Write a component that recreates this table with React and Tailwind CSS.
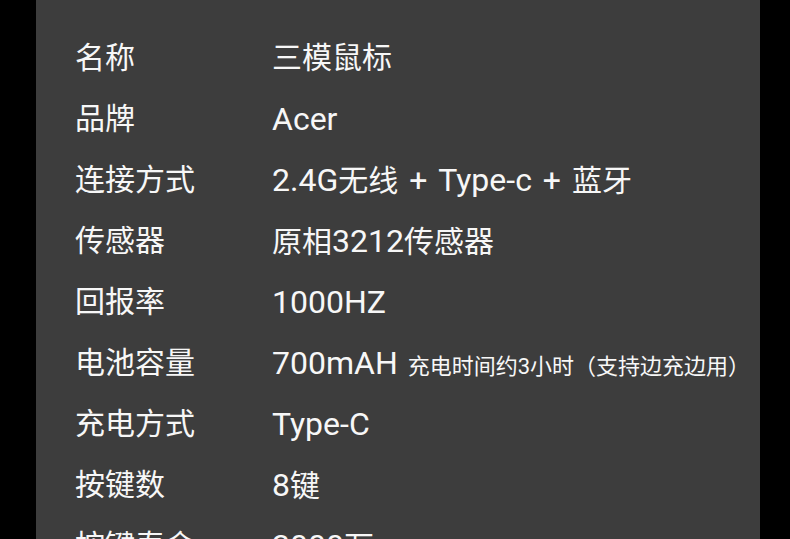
const specs = [
  ["名称", "三模鼠标"],
  ["品牌", "Acer"],
  ["连接方式", "2.4G无线 + Type-c + 蓝牙"],
  ["传感器", "原相3212传感器"],
  ["回报率", "1000HZ"],
  ["电池容量", "700mAH", "充电时间约3小时（支持边充边用）"],
  ["充电方式", "Type-C"],
  ["按键数", "8键"],
  ["按键寿命", "2000万"],
];

const cjk = /([\u4e00-\u9fff\uff00-\uffef]+)/;

// latin runs render a touch larger than the han characters
function Value({ text }) {
  return text
    .split(cjk)
    .filter(Boolean)
    .map((part, i) =>
      cjk.test(part) ? (
        <span key={i} className="text-[30px]">{part}</span>
      ) : (
        <span key={i} className="text-[32px]">{part}</span>
      )
    );
}

export default function App() {
  return (
    <div className="h-[539px] w-[790px] overflow-hidden bg-black">
      <div
        className="ml-[36px] mr-[30px] h-full bg-[#3d3d3d] pl-[39px] pt-[27px] text-[#f7f7f7]"
        style={{ fontFamily: 'Roboto, "Noto Sans CJK SC", sans-serif' }}
      >
        {specs.map(([label, value, note]) => (
          <div key={label} className="flex h-[61px] items-center">
            <div className="w-[197px] shrink-0 text-[30px] leading-none">{label}</div>
            <div className="flex items-baseline whitespace-pre leading-none [word-spacing:3px]">
              <span>
                <Value text={value} />
              </span>
              {note ? (
                <span className="ml-[10px] text-[22px] [word-spacing:0]">{note}</span>
              ) : null}
            </div>
          </div>
        ))}
      </div>
    </div>
  );
}
